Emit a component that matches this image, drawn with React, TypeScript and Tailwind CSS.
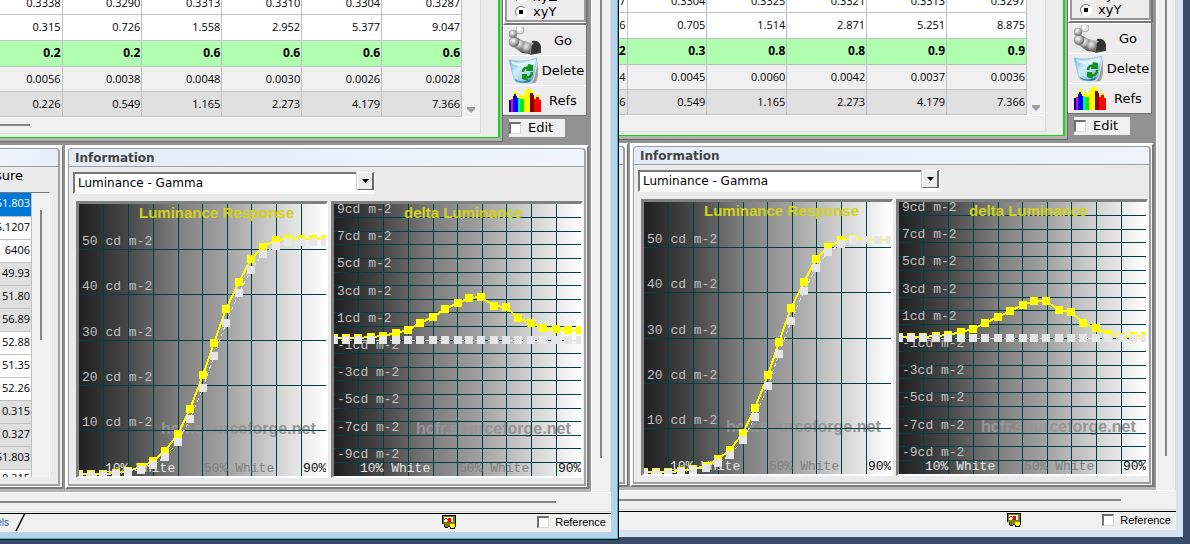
import React, { useState } from "react";

type WindowData = {
  id: string;
  active: boolean;
  rows: string[][];
  luminance: number[];
  delta: number[];
};

const leftWindow: WindowData = {
  id: "front",
  active: true,
  rows: [
    ["0.3338", "0.3290", "0.3313", "0.3310", "0.3304", "0.3287"],
    ["0.315", "0.726", "1.558", "2.952", "5.377", "9.047"],
    ["0.2", "0.2", "0.6", "0.6", "0.6", "0.6"],
    ["0.0056", "0.0038", "0.0048", "0.0030", "0.0026", "0.0028"],
    ["0.226", "0.549", "1.165", "2.273", "4.179", "7.366"],
  ],
  luminance: [
    270, 270, 270, 269, 267, 263, 257, 247, 230, 205, 171, 139, 105, 78, 55, 43,
    36, 35, 35, 35, 35,
  ],
  delta: [
    134, 134, 134, 133, 132, 129, 126, 119, 113, 105, 99, 94, 93, 102, 103, 114,
    119, 124, 125, 126, 126,
  ],
};

const rightWindow: WindowData = {
  id: "back",
  active: false,
  rows: [
    ["7", "0.3304", "0.3325", "0.3321", "0.3313", "0.3297"],
    ["6", "0.705", "1.514", "2.871", "5.251", "8.875"],
    ["2", "0.3", "0.8", "0.8", "0.9", "0.9"],
    ["4", "0.0045", "0.0060", "0.0042", "0.0037", "0.0036"],
    ["6", "0.549", "1.165", "2.273", "4.179", "7.366"],
  ],
  luminance: [
    270, 270, 270, 269, 267, 264, 257, 248, 231, 206, 173, 140, 106, 80, 57, 45,
    38, 37, 38, 38, 38,
  ],
  delta: [
    135, 135, 135, 134, 133, 130, 127, 121, 115, 109, 103, 99, 99, 108, 110,
    121, 126, 132, 135, 134, 134,
  ],
};

// Reference luminance curve, same for both windows
const reference = [
  271, 271, 271, 270, 268, 266, 261, 253, 238, 215, 184, 152, 119, 89, 66, 50,
  42, 38, 38, 38, 38,
];
const flat = reference.map(() => 136);

const gridX = [24, 49, 74, 99, 123, 148, 172, 197, 222];
const pointX = [
  0, 12, 24, 37, 49, 62, 74, 86, 99, 111, 124, 135, 147, 160, 172, 184, 197,
  209, 222, 234, 246,
];

const measures = [
  { value: "51.803", style: "bg-[#0078d7] text-white" },
  { value: "5.1207", style: "bg-white" },
  { value: "6406", style: "bg-white" },
  { value: "49.93", style: "bg-[#e0e0e0]" },
  { value: "51.80", style: "bg-[#e0e0e0]" },
  { value: "56.89", style: "bg-[#e0e0e0]" },
  { value: "52.88", style: "bg-white" },
  { value: "51.35", style: "bg-white" },
  { value: "52.26", style: "bg-white" },
  { value: "0.315", style: "bg-[#e0e0e0]" },
  { value: "0.327", style: "bg-[#e0e0e0]" },
  { value: "51.803", style: "bg-[#e0e0e0]" },
  { value: "0.315", style: "bg-white align-top" },
];

const rowStyles = [
  "h-[14px] bg-white",
  "h-[26px] bg-white",
  "h-[26px] bg-[#b0ffb0] text-[12px] font-bold",
  "h-[25px] bg-[#f0f0f0]",
  "h-[25px] bg-[#e0e0e0]",
];

const uiFont = "font-['DejaVu_Sans',Verdana,sans-serif]";
const cellFont = "font-['Open_Sans',sans-serif] text-[11px] leading-4";

function toPoints(values: number[]) {
  return values.map((y, i) => `${pointX[i]},${y}`).join(" ");
}

function Markers({ values, color }: { values: number[]; color: string }) {
  return (
    <>
      {values.map((y, i) => (
        <rect
          key={i}
          x={pointX[i] - 4}
          y={y - 4}
          width="8"
          height="8"
          fill={color}
        />
      ))}
    </>
  );
}

type ChartProps = {
  id: string;
  title: string;
  titleX: number;
  lines: number[];
  labels: { text: string; y: number }[];
  measured: number[];
  target: number[];
};

function Chart({
  id,
  title,
  titleX,
  lines,
  labels,
  measured,
  target,
}: ChartProps) {
  return (
    <div className="border-t-[3px] border-l-[3px] border-r-2 border-b-2 border-t-[#808080] border-l-[#808080] border-r-white border-b-white">
      <svg
        className="block"
        width="247"
        height="272"
        viewBox="0 0 247 272"
        role="img"
        aria-label={title}
      >
        <defs>
          <linearGradient id={id}>
            <stop offset="0" stopColor="#202020" />
            <stop offset="0.2" stopColor="#484848" />
            <stop offset="0.4" stopColor="#7e7e7e" />
            <stop offset="0.6" stopColor="#a3a3a3" />
            <stop offset="0.8" stopColor="#d2d2d2" />
            <stop offset="1" stopColor="#ffffff" />
          </linearGradient>
        </defs>
        <rect width="247" height="272" fill={`url(#${id})`} />
        <text
          x="82"
          y="230"
          fill="#959595"
          className="font-['Liberation_Sans',Arial,sans-serif] text-[16px] font-bold"
        >
          hcfr.sourceforge.net
        </text>
        <g fill="#004040" shapeRendering="crispEdges">
          {gridX.map((x) => (
            <rect key={x} x={x} y="0" width="1" height="272" />
          ))}
          {lines.map((y) => (
            <rect key={y} x="0" y={y} width="247" height="1" />
          ))}
        </g>
        <g className="font-['Liberation_Mono','Courier_New',monospace] text-[13px]">
          {labels.map((label) => (
            <text key={label.text} x="3" y={label.y} fill="#c0c0c0">
              {label.text}
            </text>
          ))}
          <text x="26" y="268" fill="#e6e6e6">
            10% White
          </text>
          <text x="125" y="268" fill="#808080">
            50% White
          </text>
          <text x="224" y="268" fill="#101010">
            90%
          </text>
        </g>
        <text
          x={titleX}
          y="14"
          fill="#d2d21a"
          className="font-['Liberation_Sans',Arial,sans-serif] text-[15px] font-bold"
        >
          {title}
        </text>
        <g shapeRendering="crispEdges">
          <polyline
            points={toPoints(measured)}
            fill="none"
            stroke="#ffff00"
            strokeWidth="2"
          />
          <Markers values={measured} color="#ffff00" />
          <polyline
            points={toPoints(target)}
            fill="none"
            stroke="#e6e6e6"
            strokeWidth="1"
            strokeDasharray="4 3"
          />
          <Markers values={target} color="#e6e6e6" />
        </g>
      </svg>
    </div>
  );
}

const luminanceLabels = [50, 40, 30, 20, 10].map((n, i) => ({
  text: `${n} cd m-2`,
  y: Math.round(41 + i * 45.3),
}));
const deltaLabels = [9, 7, 5, 3, 1, -1, -3, -5, -7, -9].map((n, i) => ({
  text: `${n}cd m-2`,
  y: Math.round(9 + i * 27.2),
}));
const luminanceLines = [45, 90, 136, 181, 226];
const deltaLines = Array.from({ length: 19 }, (_, i) =>
  Math.floor((i + 1) * 13.6)
);

function SensorIcon() {
  return (
    <svg width="33" height="28" viewBox="0 0 33 28" className="shrink-0">
      <defs>
        <radialGradient id="ball" cx="0.4" cy="0.35" r="0.7">
          <stop offset="0" stopColor="#ffffff" />
          <stop offset="0.5" stopColor="#b4b4b4" />
          <stop offset="1" stopColor="#555555" />
        </radialGradient>
        <linearGradient id="tube" x1="0" y1="0" x2="0.2" y2="1">
          <stop offset="0" stopColor="#5a5a5a" />
          <stop offset="0.5" stopColor="#c4c4c4" />
          <stop offset="1" stopColor="#4a4a4a" />
        </linearGradient>
      </defs>
      <path d="M24 14Q31 13 33 19V26L22 28Z" fill="#444444" />
      <ellipse cx="27" cy="20" rx="5" ry="6" fill="#333333" />
      <path d="M8 10L15 14L26 16Q21 20 22 27L14 26L4 19Z" fill="url(#tube)" />
      <circle cx="12" cy="18" r="5" fill="url(#ball)" />
      <circle cx="19" cy="21" r="5" fill="url(#ball)" opacity="0.8" />
      <circle cx="6" cy="15" r="5" fill="url(#ball)" stroke="#777" strokeWidth="0.5" />
      <circle cx="5" cy="7" r="4" fill="url(#ball)" stroke="#999" strokeWidth="0.5" />
      <circle cx="12" cy="3" r="4" fill="#e2e2e2" stroke="#999" strokeWidth="0.7" />
      <circle cx="11" cy="2" r="2" fill="#ffffff" />
    </svg>
  );
}

function BinIcon() {
  return (
    <svg width="33" height="28" viewBox="0 0 33 28" className="shrink-0">
      <defs>
        <linearGradient id="bin" x1="0" y1="0" x2="1" y2="1">
          <stop offset="0" stopColor="#4da3e0" />
          <stop offset="0.4" stopColor="#d2effa" />
          <stop offset="0.7" stopColor="#9bd3f2" />
          <stop offset="1" stopColor="#3c85c4" />
        </linearGradient>
      </defs>
      <path d="M30 4L26 22Q24 27 17 27L27 26Q29 24 30 18Z" fill="#a0a0a0" />
      <path
        d="M1 3Q15 6 29 1L25 22Q23 26 15 26Q7 26 6 22Z"
        fill="url(#bin)"
        stroke="#8bbbd9"
        strokeWidth="0.7"
      />
      <path d="M3 4Q14 8 28 3L27 8Q13 11 4 7Z" fill="#eaf8fd" opacity="0.8" />
      <path d="M7 22Q14 27 23 22L22 25Q14 27 8 24Z" fill="#2f78bd" />
      <g fill="none" stroke="#14901f" strokeWidth="2.5">
        <path d="M15 15Q15 10 21 11" />
        <path d="M24 15Q24 21 18 20" />
      </g>
      <path d="M20 7L25 8V14L18 14ZM19 17L20 24L14 22V17Z" fill="#14901f" />
    </svg>
  );
}

function SpectrumIcon() {
  return (
    <svg
      width="33"
      height="28"
      viewBox="0 0 33 28"
      className="shrink-0"
      shapeRendering="crispEdges"
    >
      <path
        d="M1 14V12H3V10H4V8H6V5H7V3H8V6H10V9H12V7H14V9H16V6H17V3H19V1H22V3H24V5H26V11H28V8H31V12H33V14Z"
        fill="#ffff00"
      />
      <rect x="1" y="13" width="2" height="12" fill="#000080" />
      <rect x="3" y="12" width="2" height="13" fill="#e000e0" />
      <path d="M5 25V9H6V7H8V9H9V11H10V25Z" fill="#0000f0" />
      <rect x="10" y="11" width="2" height="14" fill="#00e8ff" />
      <rect x="12" y="12" width="4" height="13" fill="#00f000" />
      <rect x="16" y="8" width="6" height="17" fill="#ffff00" />
      <path d="M22 25V6H25V8H26V25Z" fill="#800000" />
      <path d="M26 25V12H28V10H31V13H33V25Z" fill="#ff0000" />
    </svg>
  );
}

function StatusIcon() {
  return (
    <svg width="14" height="14" viewBox="0 0 14 14" shapeRendering="crispEdges">
      <path d="M0 0H14V12H13V14H8V12H6V13H3V12H2V9H0Z" fill="#000000" />
      <path d="M1 1H13V9H8V11H6V12H3V9H1Z" fill="#808000" />
      <rect x="2" y="2" width="9" height="5" fill="#ffffff" />
      <path d="M2 4H3V3H5V4H6V5H5V4H3V5H2ZM6 3H9V7H5V6H6Z" fill="#ff0000" />
      <path d="M8 9H13V12H12V13H9V12H8Z" fill="#ffff00" />
    </svg>
  );
}

function CheckBox({ id }: { id: string }) {
  return (
    <input
      id={id}
      type="checkbox"
      className="size-3 shrink-0 appearance-none border border-t-2 border-l-2 border-t-[#707070] border-l-[#707070] border-r-[#d8d8d8] border-b-[#d8d8d8] bg-white checked:bg-[#707070]"
    />
  );
}

function ActionButton({
  label,
  children,
}: {
  label: string;
  children: React.ReactNode;
}) {
  return (
    <button
      type="button"
      className="flex h-[30px] w-full items-center border-t border-l border-white bg-[#ececec] pr-px pl-1 text-[13px]"
    >
      {children}
      <span className="flex-1 text-center">{label}</span>
    </button>
  );
}

function SidePanel({ id }: { id: string }) {
  const [format, setFormat] = useState("xyY");

  return (
    <div className="w-[88px] shrink-0 bg-[#929292]">
      <div className="flex h-[25px] w-[85px] flex-col justify-end border-r-2 border-b-2 border-l-2 border-l-white border-r-[#777] border-b-[#777] bg-white pb-px">
        <div className="flex h-[23px] flex-col justify-end overflow-hidden border-x-2 border-b-2 border-[#999] bg-[#ececec] pb-px pl-2 text-[13px]">
          {["xyZ", "xyY"].map((name) => (
            <label
              key={name}
              className="flex h-[15px] shrink-0 items-center gap-1.5 leading-[15px]"
            >
              <input
                type="radio"
                name={`${id}-format`}
                checked={format === name}
                onChange={() => setFormat(name)}
                className="size-3 appearance-none rounded-full border border-[#777] border-r-white border-b-white bg-white checked:bg-[radial-gradient(#000_30%,#fff_36%)]"
              />
              {name}
            </label>
          ))}
        </div>
      </div>
      <div className="w-[84px] border-r border-b border-[#707070]">
        <ActionButton label="Go">
          <SensorIcon />
        </ActionButton>
        <ActionButton label="Delete">
          <BinIcon />
        </ActionButton>
        <ActionButton label="Refs">
          <SpectrumIcon />
        </ActionButton>
      </div>
      <label
        htmlFor={`${id}-edit`}
        className="mt-[3px] ml-1.5 flex h-[18px] w-14 items-center gap-[7px] bg-[#f0f0f0] text-[13px] leading-[18px]"
      >
        <CheckBox id={`${id}-edit`} />
        Edit
      </label>
    </div>
  );
}

function MeasureGrid({ rows }: { rows: string[][] }) {
  return (
    <div className="min-w-0 flex-1 border-r border-b border-[#6a6a6a] bg-[#b4b4b4] pr-[2px] pb-[3px]">
      <div className="h-[138px] border-r-2 border-b border-[#14d614] bg-[#ececec] pr-[17px] pb-[3px]">
        <div className="h-full border-r border-b border-[#dcdcdc] bg-[#f0f0f0]">
          <div className="flex">
            <table
              className={`min-w-0 flex-1 table-fixed border-collapse border-spacing-0 ${cellFont}`}
            >
              <colgroup>
                <col className="w-[62px]" />
                <col />
                <col />
                <col />
                <col />
                <col />
              </colgroup>
              <tbody>
                {rows.map((row, r) => (
                  <tr key={r} className={rowStyles[r]}>
                    {row.map((value, c) => (
                      <td
                        key={c}
                        className="border-r border-b border-[#c0c0c0] p-0 pr-px text-right"
                      >
                        {r === 0 ? (
                          <div className="flex h-[13px] items-end pb-0.5">
                            <span className="flex-1">{value}</span>
                          </div>
                        ) : (
                          value
                        )}
                      </td>
                    ))}
                  </tr>
                ))}
              </tbody>
            </table>
            <div className="flex w-[18px] shrink-0 flex-col justify-end pb-1 pl-[5px]">
              <svg width="8" height="6" viewBox="0 0 8 6">
                <path d="M0 0H8V2L4 6L0 2Z" fill="#a0a0a0" />
              </svg>
            </div>
          </div>
          <div className="border-t border-white pt-[6px]">
            <div className="h-0.5 w-[30px] bg-[#858585]" />
          </div>
        </div>
      </div>
    </div>
  );
}

function MeasurePane() {
  return (
    <section className="flex w-[63px] shrink-0 border-t-2 border-r border-b-2 border-t-white border-r-[#707070] border-b-[#7a7a7a] bg-[#f4f4f4] pt-px pr-0.5 pb-px">
      <div className="flex w-full flex-col rounded-tr border-t border-r-2 border-b-2 border-[#a0a0a0] bg-[#ebebeb]">
        <div className="h-[18px] rounded-tr border-b border-[#a0a0a0] bg-linear-to-r from-[#eef3fa] to-[#e6eef8]" />
        <div className="flex h-[25px] w-[35px] items-start justify-end pr-3">
          <span className="pt-px text-[13px] leading-4">sure</span>
        </div>
        <div className="mr-2 flex h-[285px] overflow-hidden border-t border-r border-t-[#777] border-r-white bg-[#f0f0f0]">
          <div className="flex w-8 shrink-0 items-start justify-end">
            <table className={`w-full shrink-0 border-collapse ${cellFont}`}>
              <tbody>
                {measures.map((m, i) => (
                  <tr key={i} className={`h-[23px] ${m.style}`}>
                    <td className="border-r border-b border-[#c0c0c0] p-0 pr-px pb-0.5 text-right">
                      {m.value}
                    </td>
                  </tr>
                ))}
              </tbody>
            </table>
          </div>
          <div className="mt-[17px] ml-2 h-[130px] w-0.5 bg-[#858585]" />
        </div>
      </div>
    </section>
  );
}

function InformationPane({ data }: { data: WindowData }) {
  return (
    <section className="min-w-0 flex-1 border-t-2 border-r-2 border-b-2 border-l-2 border-t-white border-r-[#7a7a7a] border-b-[#7a7a7a] border-l-white bg-[#f4f4f4] p-px">
      <div className="rounded-t border-t border-r-2 border-b-2 border-l border-[#a0a0a0] bg-[#ebebeb] pb-1.5">
        <h2 className="h-[18px] rounded-t border-b border-[#a0a0a0] bg-linear-to-r from-[#e4ecf7] to-[#eff4fb] pt-px pl-1.5 text-[12px] leading-[17px] font-bold text-[#444]">
          Information
        </h2>
        <div className="relative mt-[3px] ml-1 h-[22px] w-[302px]">
          <select
            aria-label="Information view"
            className="h-full w-full appearance-none rounded-none border-2 border-t-[#777] border-r-[#f8f8f8] border-b-[#f8f8f8] border-l-[#777] bg-white pl-[3px] text-[12px] leading-4 text-black"
          >
            <option>Luminance - Gamma</option>
          </select>
          <span className="pointer-events-none absolute top-0.5 right-px bottom-0.5 flex w-[17px] items-center justify-center border border-r-2 border-t-white border-r-[#666] border-b-[#666] border-l-white bg-[#ececec] shadow-[-1px_0_0_#ccc]">
            <svg width="7" height="4" viewBox="0 0 7 4">
              <path d="M0 0H7L3.5 4Z" fill="#000" />
            </svg>
          </span>
        </div>
        <div className="mt-[9px] flex gap-[3px] pl-[7px]">
          <Chart
            id={`${data.id}-luminance`}
            title="Luminance Response"
            titleX={60}
            lines={luminanceLines}
            labels={luminanceLabels}
            measured={data.luminance}
            target={reference}
          />
          <Chart
            id={`${data.id}-delta`}
            title="delta Luminance"
            titleX={70}
            lines={deltaLines}
            labels={deltaLabels}
            measured={data.delta}
            target={flat}
          />
        </div>
      </div>
    </section>
  );
}

function StatusBar({ id }: { id: string }) {
  return (
    <div className="flex h-[19px] items-center border-t border-black bg-[#f0f0f0] pb-0.5 font-['Liberation_Sans',Arial,sans-serif] text-[11px]">
      <span className="-ml-[6px] w-[15px] text-right text-[10px] text-[#2a5ea0]">
        els
      </span>
      <svg className="ml-1.5" width="12" height="18" viewBox="0 0 12 18">
        <path d="M10 0L1 18" stroke="#000" strokeWidth="1.5" />
      </svg>
      <span className="flex-1" />
      <StatusIcon />
      <label
        htmlFor={`${id}-reference`}
        className="ml-[81px] flex items-center gap-1.5 pr-[5px]"
      >
        <CheckBox id={`${id}-reference`} />
        Reference
      </label>
    </div>
  );
}

function MeasureWindow({ data }: { data: WindowData }) {
  // The active window has a stronger frame colour with a bright outline
  const frame = data.active
    ? "min-w-[619px] border-r border-b border-black"
    : "min-w-[618px] -mt-0.5";
  const edge = data.active
    ? "border-r border-b border-[#1fc8dc] bg-[#b9d1ea] pr-1.5 pb-1.5"
    : "bg-[#d9e4f2] pr-[7px] pb-[7px]";

  return (
    <div className="flex min-w-0 justify-end overflow-hidden">
      <div className={`w-full shrink-0 self-start ${frame}`}>
        <div className={edge}>
          <div className="flex flex-col bg-[#f0f0f0]">
            <div className="flex">
              <div className="min-w-0 flex-1">
                <div className="bg-[#929292]">
                  <div className="flex h-[142px]">
                    <MeasureGrid rows={data.rows} />
                    <SidePanel id={data.id} />
                  </div>
                  <div className="mt-[3px] flex gap-0.5 pr-0.5">
                    <MeasurePane />
                    <InformationPane data={data} />
                  </div>
                  <div className="h-[3px] bg-[#b4b4b4]" />
                </div>
              </div>
              <div className="w-5 shrink-0 border-r border-l border-l-white border-r-[#dcdcdc]">
                <div className="ml-2 h-[458px] w-0.5 bg-[#858585]" />
              </div>
            </div>
            <div className="h-[21px] border-t border-white pt-2">
              <div className="mr-[55px] h-0.5 bg-[#858585]" />
              <div className="mt-2 h-px bg-[#dcdcdc]" />
            </div>
            <StatusBar id={data.id} />
          </div>
        </div>
      </div>
    </div>
  );
}

export default function App() {
  return (
    <main
      className={`grid min-h-screen grid-cols-[619fr_571fr] overflow-hidden bg-[#384b68] text-black ${uiFont}`}
    >
      <MeasureWindow data={leftWindow} />
      <div className="min-w-0 pr-[7px]">
        <MeasureWindow data={rightWindow} />
      </div>
    </main>
  );
}
